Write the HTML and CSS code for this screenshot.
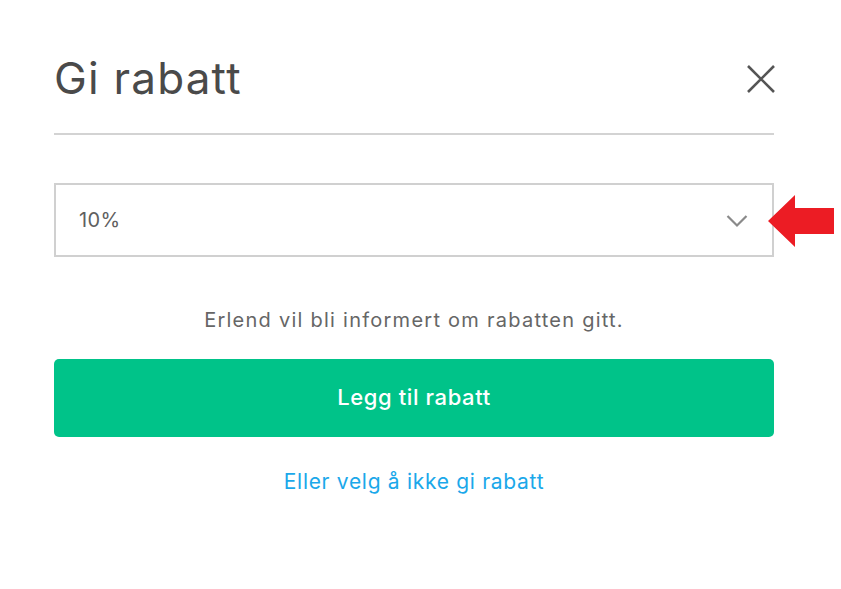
FILE: index.html
```html
<!DOCTYPE html>
<html lang="no">
<head>
<meta charset="utf-8">
<title>Gi rabatt</title>
<link rel="stylesheet" href="styles.css">
</head>
<body>
<div class="modal">
  <div class="header">
    <h1 class="title">Gi rabatt</h1>
    <button class="close" aria-label="Lukk">
      <svg width="30" height="30" viewBox="0 0 30 30"><path d="M2 2 L28 28 M28 2 L2 28" stroke="#555" stroke-width="2.6" fill="none"/></svg>
    </button>
  </div>
  <div class="divider"></div>
  <div class="select-wrap">
    <div class="select">
      <span class="value">10%</span>
      <svg class="chevron" width="22" height="14" viewBox="0 0 22 14"><path d="M1.5 2 L11 11.5 L20.5 2" stroke="#8a8a8a" stroke-width="2.2" fill="none"/></svg>
    </div>
    <svg class="arrow" width="66" height="52" viewBox="0 0 66 52"><polygon points="0,26 27,0 27,13 66,13 66,39 27,39 27,52" fill="#ec1c24"/></svg>
  </div>
  <p class="info">Erlend vil bli informert om rabatten gitt.</p>
  <button class="primary">Legg til rabatt</button>
  <a class="link" href="#">Eller velg å ikke gi rabatt</a>
</div>
</body>
</html>
```
FILE: styles.css
```css
html, body {
  margin: 0;
  padding: 0;
  background: #fff;
}
body {
  font-family: "Inter", "Open Sans", sans-serif;
  color: #555;
}
.modal {
  width: 720px;
  padding: 54px 0 0 54px;
  display: flex;
  flex-direction: column;
}
.header {
  display: flex;
  justify-content: space-between;
  align-items: center;
  height: 48px;
}
.title {
  margin: 0;
  font-size: 44px;
  font-weight: 400;
  color: #4a4a4a;
  letter-spacing: 1.2px;
  line-height: 48px;
}
.close {
  border: 0;
  background: none;
  padding: 0;
  margin-right: -2px;
  margin-top: 2px;
  display: flex;
}
.divider {
  height: 2px;
  background: #d3d3d3;
  margin-top: 31px;
}
.select-wrap {
  position: relative;
  margin-top: 48px;
}
.select {
  height: 70px;
  border: 2px solid #d0d0d0;
  display: flex;
  align-items: center;
  justify-content: space-between;
  padding: 0 24px 0 23px;
}
.value {
  font-size: 20px;
  color: #606060;
  letter-spacing: 0.4px;
}
.chevron {
  margin-top: 2px;
}
.arrow {
  position: absolute;
  left: 714px;
  top: 12px;
}
.info {
  margin: 49px 0 0;
  text-align: center;
  font-size: 20px;
  color: #666;
  line-height: 28px;
  letter-spacing: 1.25px;
}
.primary {
  margin-top: 25px;
  height: 78px;
  border: 0;
  border-radius: 5px;
  background: #00c389;
  color: #fff;
  font-family: "Inter", sans-serif;
  font-size: 22px;
  font-weight: 500;
  letter-spacing: 0.6px;
  padding-bottom: 3px;
}
.link {
  margin-top: 32px;
  text-align: center;
  font-size: 21px;
  color: #1ba8ea;
  text-decoration: none;
  letter-spacing: 0.7px;
}
```
